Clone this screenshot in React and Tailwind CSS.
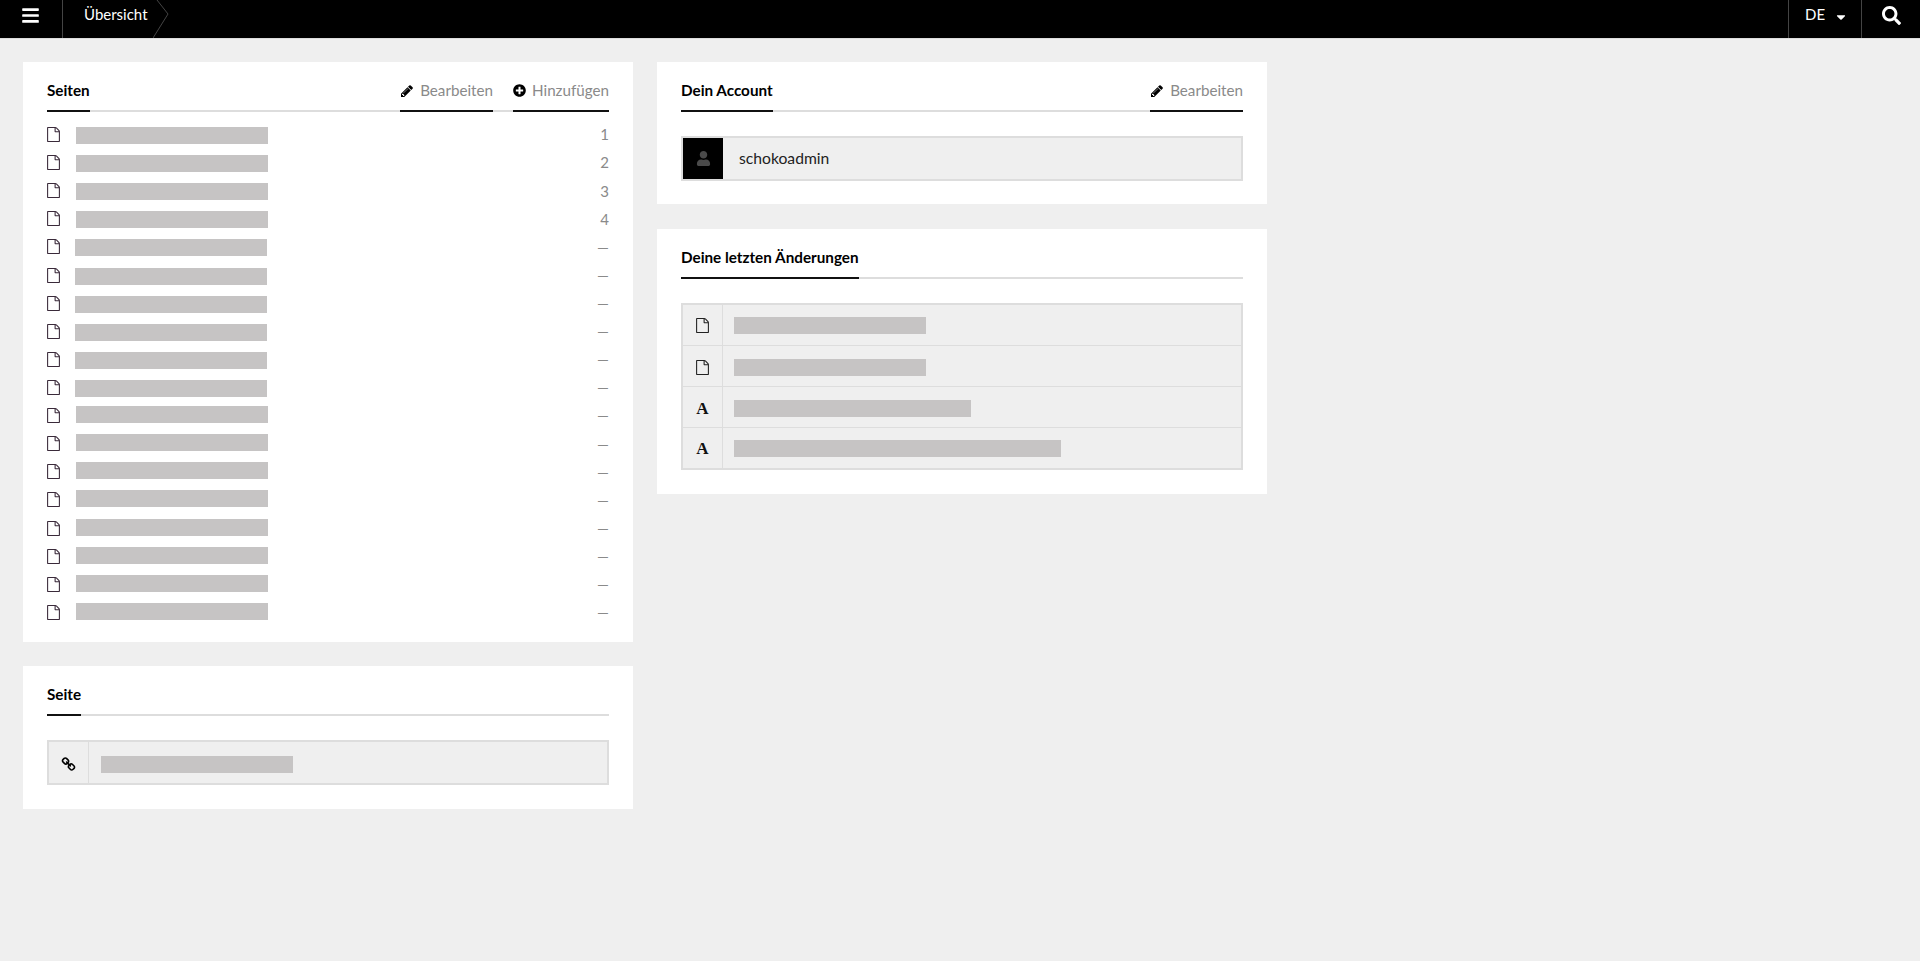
import { FaBars, FaSearch, FaPlusCircle, FaUser, FaCaretDown } from 'react-icons/fa';

const FileIcon = ({ className }) => (
  <svg viewBox="0 0 1792 1792" fill="currentColor" className={className}>
    <path d="M1596 380q28 28 48 76t20 88v1152q0 40-28 68t-68 28h-1344q-40 0-68-28t-28-68v-1600q0-40 28-68t68-28h896q40 0 88 20t76 48zm-444-244v376h376q-10-29-22-41l-313-313q-12-12-41-22zm384 1528v-1024h-416q-40 0-68-28t-28-68v-416h-768v1536h1280z" />
  </svg>
);

const PencilIcon = ({ className }) => (
  <svg viewBox="0 0 1792 1792" fill="currentColor" className={className}>
    <path d="M491 1536l91-91-235-235-91 91v107h128v128h107zm523-928q0-22-22-22-10 0-17 7l-542 542q-7 7-7 17 0 22 22 22 10 0 17-7l542-542q7-7 7-17zm-54-192l416 416-832 832h-416v-416zm683 96q0 53-37 90l-166 166-416-416 166-165q36-38 90-38 53 0 91 38l235 234q37 39 37 91z" />
  </svg>
);

const LinkIcon = ({ className }) => (
  <svg viewBox="0 0 1792 1792" fill="currentColor" className={className}>
    <path d="M1520 1216q0-40-28-68l-208-208q-28-28-68-28-42 0-72 32 3 3 19 18.5t21.5 21.5 15 19 13 25.5 3.5 27.5q0 40-28 68t-68 28q-15 0-27.5-3.5t-25.5-13-19-15-21.5-21.5-18.5-19q-33 31-33 73 0 40 28 68l206 207q27 27 68 27 40 0 68-26l147-146q28-28 28-67zm-703-705q0-40-28-68l-206-207q-28-28-68-28-39 0-68 27l-147 146q-28 28-28 67 0 40 28 68l208 208q27 27 68 27 42 0 72-31-3-3-19-18.5t-21.5-21.5-15-19-13-25.5-3.5-27.5q0-40 28-68t68-28q15 0 27.5 3.5t25.5 13 19 15 21.5 21.5 18.5 19q33-31 33-73zm895 705q0 120-85 203l-147 146q-83 83-203 83-121 0-204-85l-206-207q-83-83-83-203 0-123 88-209l-88-88q-86 88-208 88-120 0-204-84l-208-208q-84-84-84-204t85-203l147-146q83-83 203-83 121 0 204 85l206 207q83 83 83 203 0 123-88 209l88 88q86-88 208-88 120 0 204 84l208 208q84 84 84 204z" />
  </svg>
);

// redacted text blocks in the reference
const Redacted = ({ className = 'w-[192px]' }) => <div className={`h-[17px] bg-[#c6c4c4] ${className}`} />;

const pages = ['1', '2', '3', '4', '—', '—', '—', '—', '—', '—', '—', '—', '—', '—', '—', '—', '—', '—'];

const changes = [
  { icon: 'file', width: 'w-[192px]', height: 'h-[41px]', pad: 'pt-[1px]' },
  { icon: 'file', width: 'w-[192px]', height: 'h-[41px]', pad: 'pt-[3px]' },
  { icon: 'font', width: 'w-[237px]', height: 'h-[41px]', pad: 'pt-[3px]' },
  { icon: 'font', width: 'w-[327px]', height: 'h-[40px]', pad: 'pt-[1px]' },
];

const Action = ({ icon, label }) => (
  <a className="flex items-center gap-[6px] h-[36px] pb-[5px] border-b-2 border-[#111] text-[#8a8a8a] text-[15.2px]">
    {icon}
    {label}
  </a>
);

const CardHeader = ({ title, children }) => (
  <div className="flex justify-between h-[36px] border-b-2 border-[#ddd]">
    <h2 className="flex items-center h-[36px] pb-[6px] border-b-2 border-[#111] text-[15.25px] font-bold text-black">{title}</h2>
    {children && <div className="flex gap-5">{children}</div>}
  </div>
);

const Card = ({ children, className = 'pb-6' }) => (
  <section className={`bg-white px-6 pt-[14px] ${className}`}>{children}</section>
);

export default function App() {
  return (
    <div className="min-h-screen bg-[#efefef] font-['Lato','Liberation_Sans',sans-serif] text-[#333]">
      {/* Top bar */}
      <header className="flex items-stretch h-[39px] bg-black border-b border-[#ddd] text-white">
        <button className="flex items-center justify-center w-[63px] border-r border-[#444] pr-[1px]">
          <FaBars className="w-[19px] h-[19px] -mt-[8px]" />
        </button>
        <div className="relative flex items-center pl-[21px] text-[15px] -mt-[10px]">
          Übersicht
          <svg viewBox="0 0 16 38" className="absolute left-[90px] top-[10px] w-[16px] h-[38px]" fill="none" stroke="#444">
            <path d="M4 0l11 14L0 38" />
          </svg>
        </div>
        <div className="flex ml-auto">
          <button className="flex items-center gap-[9px] w-[73px] pl-[16px] border-l border-[#444] text-[15px]">
            <span className="-mt-[10px]">DE</span>
            <FaCaretDown className="w-[14px] h-[14px] -mt-[5px]" />
          </button>
          <button className="flex items-center justify-center w-[59px] border-l border-[#444]">
            <FaSearch className="w-[19px] h-[19px] -mt-[7px]" />
          </button>
        </div>
      </header>

      <main className="grid grid-cols-[610px_610px] gap-6 pl-[23px] pt-[23px]">
        <div className="flex flex-col gap-6">
          <Card className="pb-[15px]">
            <CardHeader title="Seiten">
              <Action icon={<PencilIcon className="w-[14px] h-[14px] text-black" />} label="Bearbeiten" />
              <Action icon={<FaPlusCircle className="w-[13px] h-[13px] text-black" />} label="Hinzufügen" />
            </CardHeader>
            <ul className="mt-[9.5px]">
              {pages.map((num, i) => (
                <li key={i} className="flex items-center h-[28.12px]">
                  <FileIcon className="w-[15px] h-[15px] -ml-[1px] -mt-[2px] text-[#3a2a3a]" />
                  <Redacted
                    className={`w-[192px] ${i >= 4 && i <= 9 ? 'ml-[14px]' : 'ml-[15px]'} ${i >= 10 ? '-translate-y-[2px]' : ''}`}
                  />
                  <span className="ml-auto -mt-[2px] text-[15px] text-[#8a8a8a]">{num}</span>
                </li>
              ))}
            </ul>
          </Card>

          <Card>
            <CardHeader title="Seite" />
            <div className="flex h-[45px] mt-6 border-2 border-[#ddd] bg-[#efefef]">
              <div className="flex items-center justify-center w-[40px] pt-[4px] border-r border-[#ddd]">
                <LinkIcon className="w-[15px] h-[15px] text-black" />
              </div>
              <div className="flex items-center pl-[12px] pt-[4px]">
                <Redacted />
              </div>
            </div>
          </Card>
        </div>

        <div className="flex flex-col gap-6 items-stretch">
          <Card className="pb-[23px]">
            <CardHeader title="Dein Account">
              <Action icon={<PencilIcon className="w-[14px] h-[14px] text-black" />} label="Bearbeiten" />
            </CardHeader>
            <div className="flex h-[45px] mt-6 border-2 border-[#ddd] bg-[#efefef]">
              <div className="flex items-center justify-center w-[40px] bg-black">
                <FaUser className="w-[15px] h-[15px] text-[#4a4a4a]" />
              </div>
              <div className="flex items-center pl-[16px] text-[15.7px] text-[#222]">schokoadmin</div>
            </div>
          </Card>

          <Card className="pb-6 mt-px">
            <CardHeader title="Deine letzten Änderungen" />
            <div className="mt-6 border-2 border-[#ddd] bg-[#efefef] divide-y divide-[#ddd]">
              {changes.map((row, i) => (
                <div key={i} className={`flex ${row.height}`}>
                  <div className={`flex items-center justify-center w-[40px] border-r border-[#ddd] ${row.pad}`}>
                    {row.icon === 'file' ? (
                      <FileIcon className="w-[15px] h-[15px] text-[#222]" />
                    ) : (
                      <span className="font-['Liberation_Serif',serif] font-bold text-[17px] text-[#111]">A</span>
                    )}
                  </div>
                  <div className={`flex items-center pl-[11px] ${row.pad}`}>
                    <Redacted className={row.width} />
                  </div>
                </div>
              ))}
            </div>
          </Card>
        </div>
      </main>
    </div>
  );
}
